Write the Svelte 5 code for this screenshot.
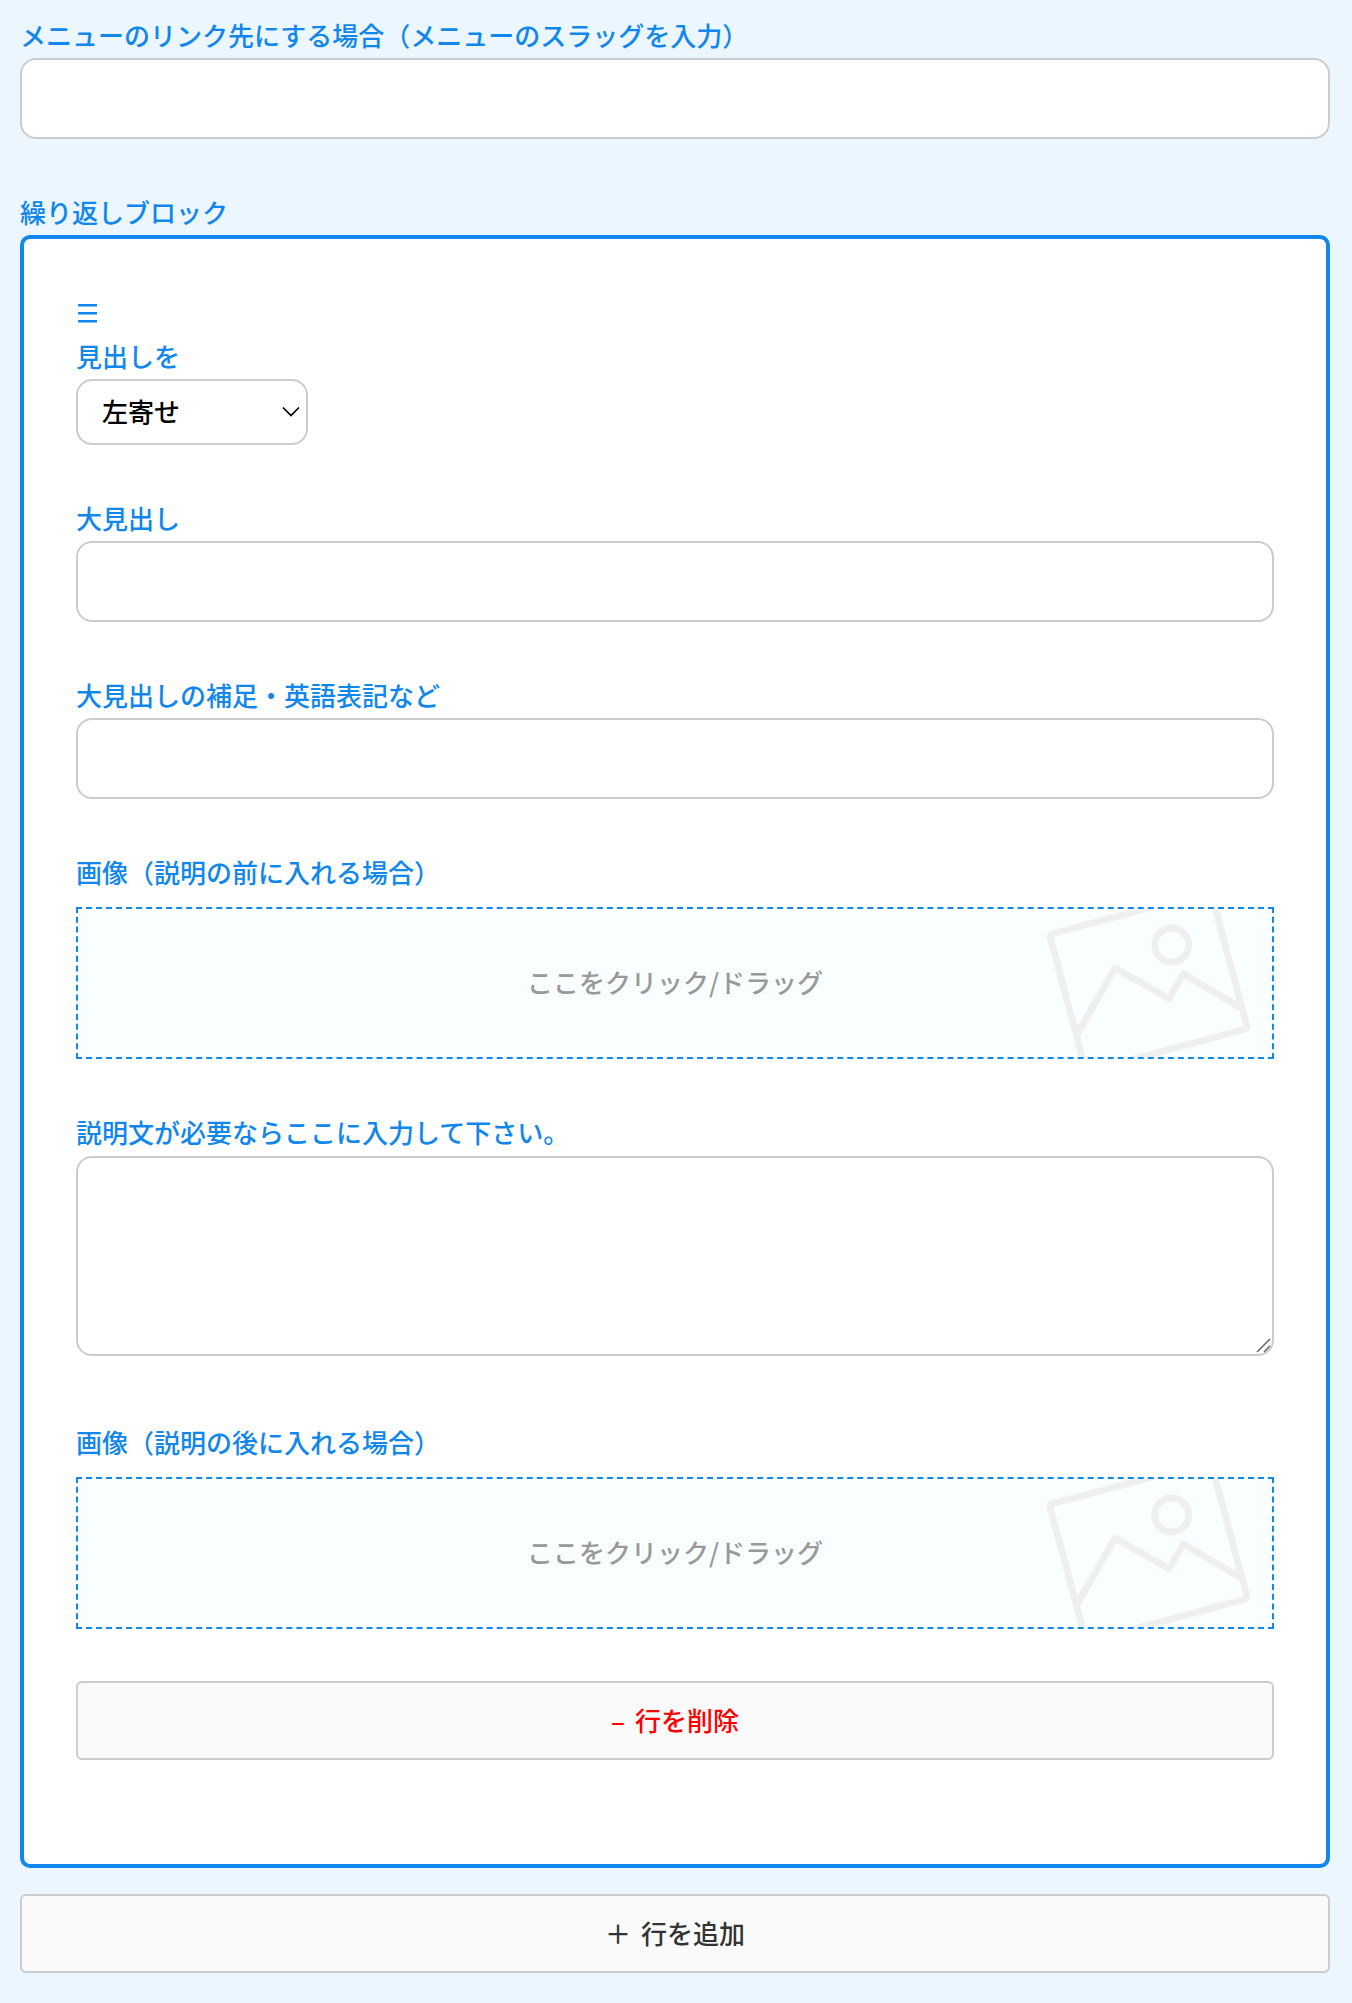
<script>
    let slug = $state('');
    let align = $state('left');
    let heading = $state('');
    let subheading = $state('');
    let description = $state('');
</script>

{#snippet dropzone(id)}
    <button type="button" class="dropzone" {id}>
        <span>ここをクリック/ドラッグ</span>
        <svg class="dropzone-icon" viewBox="40 29 232 148" aria-hidden="true">
            <g fill="none" stroke="#efeff1" stroke-width="6.8" stroke-linejoin="round">
                <rect x="-83" y="-71" width="167" height="142" rx="3" transform="translate(148 101.7) rotate(-15)" />
                <circle cx="171.7" cy="65" r="17" />
                <path d="M77.5 153.5 L115 88 L169 118.8 L183.3 94 L240.5 127.5" />
            </g>
        </svg>
    </button>
{/snippet}

<main class="form">
    <div class="field">
        <label for="slug">メニューのリンク先にする場合（メニューのスラッグを入力）</label>
        <input id="slug" type="text" bind:value={slug} />
    </div>

    <div class="legend">繰り返しブロック</div>
    <section class="block">
        <div class="handle">
            <svg viewBox="0 0 24 24" width="24" height="24" aria-hidden="true">
                <path d="M2 4.3 H21 M2 12.3 H21 M2 20.3 H21" stroke="currentColor" stroke-width="2.4" />
            </svg>
        </div>

        <div class="field">
            <label for="align">見出しを</label>
            <div class="select">
                <select id="align" bind:value={align}>
                    <option value="left">左寄せ</option>
                    <option value="center">中央寄せ</option>
                    <option value="right">右寄せ</option>
                </select>
                <svg viewBox="0 0 18 12" width="18" height="12" aria-hidden="true">
                    <path d="M1 1.5 L9 9.5 L17 1.5" fill="none" stroke="#000" stroke-width="1.7" />
                </svg>
            </div>
        </div>

        <div class="field">
            <label for="heading">大見出し</label>
            <input id="heading" type="text" bind:value={heading} />
        </div>

        <div class="field">
            <label for="subheading">大見出しの補足・英語表記など</label>
            <input id="subheading" type="text" bind:value={subheading} />
        </div>

        <div class="field">
            <label for="image-before">画像（説明の前に入れる場合）</label>
            {@render dropzone('image-before')}
        </div>

        <div class="field">
            <label for="description">説明文が必要ならここに入力して下さい。</label>
            <div class="textarea">
                <textarea id="description" bind:value={description}></textarea>
                <svg viewBox="0 0 16 16" width="16" height="16" aria-hidden="true">
                    <path d="M1 14 L14 1 M8 14 L14 8" fill="none" stroke="#666" stroke-width="1.5" />
                </svg>
            </div>
        </div>

        <div class="field">
            <label for="image-after">画像（説明の後に入れる場合）</label>
            {@render dropzone('image-after')}
        </div>

        <button type="button" class="row-button remove"><span class="sign">–</span> 行を削除</button>
    </section>

    <button type="button" class="row-button add"><span class="sign">＋</span> 行を追加</button>
</main>

<style>
    :global(body) {
        background: #ebf6ff;
    }

    .form {
        padding: 14px 22px 28px 20px;
        color: #1187ec;
        font-family: "Noto Sans CJK JP", sans-serif;
        font-size: 26px;
        font-weight: 500;
        line-height: 42px;
    }

    .form * {
        box-sizing: border-box;
    }

    .field {
        margin-bottom: 52px;
    }

    label,
    .legend {
        display: block;
        padding-bottom: 2px;
    }

    input,
    select,
    textarea,
    button {
        display: block;
        width: 100%;
        margin: 0;
        font: inherit;
    }

    input,
    select,
    textarea {
        border: 2px solid #ccc;
        border-radius: 16px;
        background: #fff;
        color: #000;
    }

    input {
        height: 81px;
        padding: 0 24px;
    }

    .block {
        padding: 52px 52px 104px;
        border: 4px solid #1187ec;
        border-radius: 10px;
        background: #fff;
    }

    .handle {
        display: flex;
        align-items: center;
        height: 44px;
    }

    .select {
        position: relative;
        width: 232px;
    }

    select {
        height: 66px;
        padding: 0 24px 2px;
        appearance: none;
    }

    .select svg {
        position: absolute;
        top: 27px;
        right: 8px;
        pointer-events: none;
    }

    .textarea {
        position: relative;
        padding: 1px 0 13px;
    }

    textarea {
        height: 200px;
        padding: 16px 24px;
        resize: none;
    }

    .textarea svg {
        position: absolute;
        right: 2px;
        bottom: 15px;
        pointer-events: none;
    }

    .dropzone {
        position: relative;
        height: 152px;
        margin-top: 12px;
        padding: 0 0 2px;
        border: 2px dashed #1187ec;
        background: #f9feff;
        color: #999;
        cursor: pointer;
    }

    .dropzone-icon {
        position: absolute;
        top: 0;
        right: 0;
        width: 232px;
        height: 148px;
    }

    .row-button {
        height: 79px;
        padding: 0 0 2px;
        border: 2px solid #ccc;
        border-radius: 6px;
        background: #fafafa;
        color: #333;
        cursor: pointer;
    }

    .sign {
        margin-right: 4px;
    }

    .remove {
        color: #f00;
    }

    .add {
        margin-top: 26px;
    }
</style>
